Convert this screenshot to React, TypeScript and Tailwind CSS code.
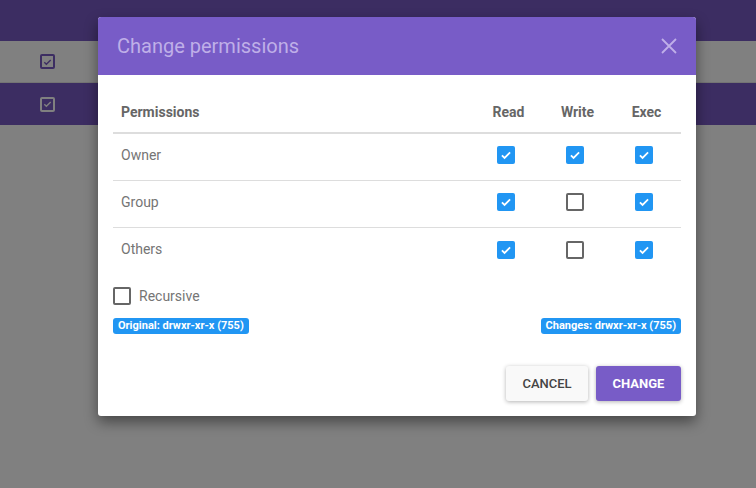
import React from 'react';

const font = { fontFamily: 'Roboto, "Liberation Sans", sans-serif' };

const Box: React.FC<{ checked: boolean }> = ({ checked }) =>
  checked ? (
    <span className="inline-flex w-[18px] h-[18px] items-center justify-center rounded-[2px] bg-[#2196f3]">
      <svg viewBox="0 0 24 24" className="w-[14px] h-[14px]" fill="none" stroke="#fff" strokeWidth="3">
        <path d="M5 12.5l4.5 4.5L19 7.5" />
      </svg>
    </span>
  ) : (
    <span className="inline-block w-[18px] h-[18px] rounded-[2px] border-2 border-[#666]" />
  );

const rows = [
  { name: 'Owner', perms: [true, true, true] },
  { name: 'Group', perms: [true, false, true] },
  { name: 'Others', perms: [true, false, true] },
];

export default function App() {
  return (
    <div className="relative w-[756px] h-[488px] overflow-hidden bg-[#808080]" style={font}>
      {/* page behind the overlay */}
      <div className="h-[41px] bg-[#3c2d62]" />
      <div className="h-[42px] bg-[#808080] border-b border-[#747474] flex items-center pl-[40px]">
        <span className="w-[15px] h-[15px] border-2 border-[#3c2d62] rounded-[2px] flex items-center justify-center">
          <svg viewBox="0 0 24 24" className="w-[12px] h-[12px]" fill="none" stroke="#3c2d62" strokeWidth="3">
            <path d="M5 12.5l4.5 4.5L19 7.5" />
          </svg>
        </span>
      </div>
      <div className="h-[42px] bg-[#3c2d62] flex items-center pl-[40px]">
        <span className="w-[15px] h-[15px] border-2 border-[#808080] rounded-[2px] flex items-center justify-center">
          <svg viewBox="0 0 24 24" className="w-[12px] h-[12px]" fill="none" stroke="#808080" strokeWidth="3">
            <path d="M5 12.5l4.5 4.5L19 7.5" />
          </svg>
        </span>
      </div>

      {/* dialog */}
      <div className="absolute left-[98px] top-[17px] w-[598px] bg-white rounded-[3px] shadow-[0_6px_14px_rgba(0,0,0,0.45)] overflow-hidden">
        <div className="h-[58px] bg-[#785cc7] flex items-center justify-between pl-[19px] pr-[15px]">
          <span className="text-[20px] text-[#bfafe8]">Change permissions</span>
          <svg viewBox="0 0 24 24" className="w-[24px] h-[24px]" fill="none" stroke="#bfafe8" strokeWidth="1.8">
            <path d="M5 5l14 14M19 5L5 19" />
          </svg>
        </div>

        <div className="px-[15px] pt-[16px] pb-[15px]">
          <div className="flex h-[43px] items-center pt-[2px] border-b-2 border-[#dddddd] text-[14px] font-bold text-[#666]">
            <div className="flex-1 pl-[8px]">Permissions</div>
            <div className="w-[69px] text-center">Read</div>
            <div className="w-[69px] text-center">Write</div>
            <div className="w-[69px] text-center">Exec</div>
          </div>
          {rows.map((r, i) => (
            <div
              key={r.name}
              className={`flex h-[47px] items-center pb-[4px] text-[14px] text-[#757575] ${i < 2 ? 'border-b border-[#dddddd]' : ''}`}
            >
              <div className="flex-1 pl-[8px]">{r.name}</div>
              {r.perms.map((p, j) => (
                <div key={j} className="w-[69px] flex justify-center pr-[5px]">
                  <Box checked={p} />
                </div>
              ))}
            </div>
          ))}

          <div className="flex items-center mt-[10px] h-[22px]">
            <span className="inline-block w-[18px] h-[18px] rounded-[2px] border-2 border-[#666]" />
            <span className="ml-[8px] text-[14px] text-[#757575]">Recursive</span>
          </div>

          <div className="flex justify-between mt-[11px]">
            <span className="bg-[#2196f3] text-white text-[11px] font-bold rounded-[3px] px-[5px] h-[16px] leading-[16px]">
              Original: drwxr-xr-x (755)
            </span>
            <span className="bg-[#2196f3] text-white text-[11px] font-bold rounded-[3px] px-[5px] h-[16px] leading-[16px]">
              Changes: drwxr-xr-x (755)
            </span>
          </div>

          <div className="flex justify-end gap-[8px] mt-[32px]">
            <button className="w-[82px] h-[35px] rounded-[3px] bg-[#f9f9f9] text-[13px] font-medium text-[#444] shadow-[0_1px_4px_rgba(0,0,0,0.3)]">
              CANCEL
            </button>
            <button className="w-[85px] h-[35px] rounded-[3px] bg-[#785cc7] text-[13px] font-bold text-white shadow-[0_1px_4px_rgba(0,0,0,0.3)]">
              CHANGE
            </button>
          </div>
        </div>
      </div>
    </div>
  );
}
